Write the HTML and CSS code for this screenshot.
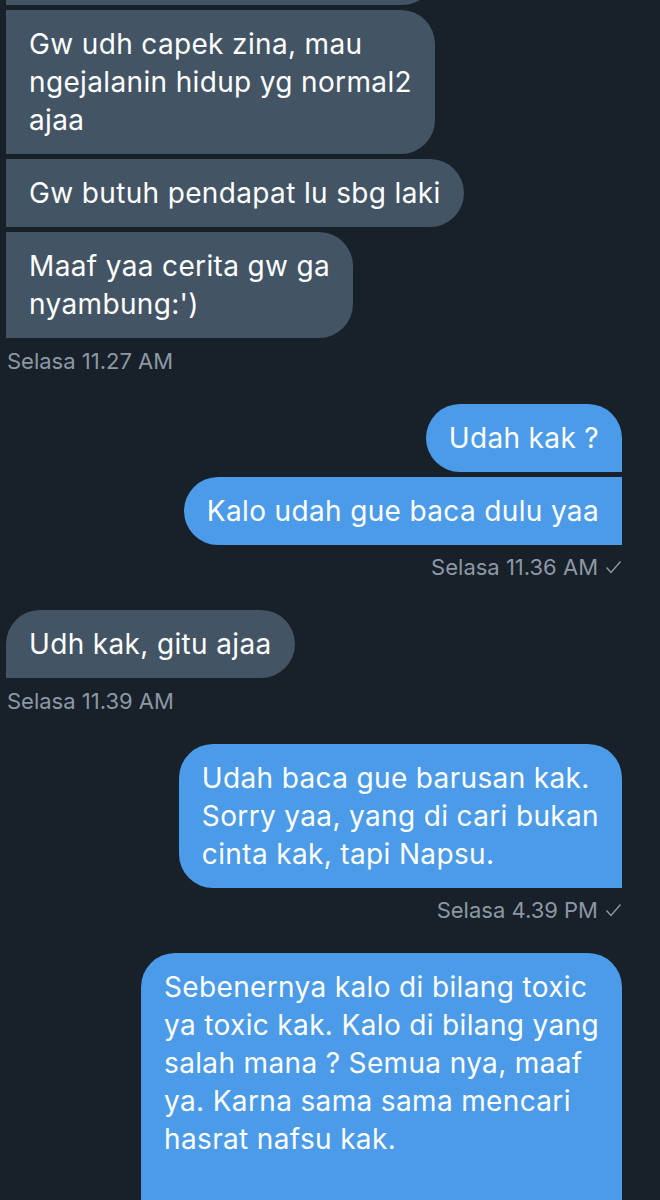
FILE: index.html
```html
<!DOCTYPE html>
<html lang="id">
<head>
    <meta charset="UTF-8">
    <meta name="viewport" content="width=device-width, initial-scale=1.0">
    <title>Pesan</title>
    <link rel="stylesheet" href="styles.css">
</head>
<body>
    <div class="chat">
        <div class="group received">
            <div class="bubble first stub"></div>
            <div class="bubble">Gw udh capek zina, mau<br>ngejalanin hidup yg normal2<br>ajaa</div>
            <div class="bubble">Gw butuh pendapat lu sbg laki</div>
            <div class="bubble">Maaf yaa cerita gw ga<br>nyambung:')</div>
            <div class="time">Selasa 11.27 AM</div>
        </div>

        <div class="group sent">
            <div class="bubble first">Udah kak ?</div>
            <div class="bubble">Kalo udah gue baca dulu yaa</div>
            <div class="time">Selasa 11.36 AM
                <svg class="check" width="17" height="14" viewBox="0 0 17 14"><polyline points="1.5,7.5 6,12.5 15.5,1.5" fill="none" stroke="currentColor" stroke-width="1.4"/></svg>
            </div>
        </div>

        <div class="group received">
            <div class="bubble first">Udh kak, gitu ajaa</div>
            <div class="time">Selasa 11.39 AM</div>
        </div>

        <div class="group sent">
            <div class="bubble first">Udah baca gue barusan kak.<br>Sorry yaa, yang di cari bukan<br>cinta kak, tapi Napsu.</div>
            <div class="time">Selasa 4.39 PM
                <svg class="check" width="17" height="14" viewBox="0 0 17 14"><polyline points="1.5,7.5 6,12.5 15.5,1.5" fill="none" stroke="currentColor" stroke-width="1.4"/></svg>
            </div>
        </div>

        <div class="group sent">
            <div class="bubble first last-open">Sebenernya kalo di bilang toxic<br>ya toxic kak. Kalo di bilang yang<br>salah mana ? Semua nya, maaf<br>ya. Karna sama sama mencari<br>hasrat nafsu kak.</div>
        </div>
    </div>
</body>
</html>
```

FILE: styles.css
```css
body {
    margin: 0;
    background-color: #18202a;
    font-family: "Inter", "Noto Sans", sans-serif;
    color: #fff;
    overflow: hidden;
}

.chat {
    display: flex;
    flex-direction: column;
    margin-top: -63px;
    padding: 0 38px 0 6px;
}

.group {
    display: flex;
    flex-direction: column;
    gap: 5px;
    margin-bottom: 30px;
}

.received {
    align-items: flex-start;
}

.sent {
    align-items: flex-end;
}

.bubble {
    font-size: 28px;
    line-height: 38px;
    letter-spacing: 0.35px;
    padding: 15px 23px;
    white-space: nowrap;
}

.stub {
    width: 384px;
    height: 38px;
}

.received .bubble {
    background-color: #435465;
    border-radius: 0 34px 34px 0;
}

.received .bubble.first {
    border-top-left-radius: 34px;
}

.sent .bubble {
    background-color: #4b9be8;
    border-radius: 34px 0 0 34px;
}

.sent .bubble.first {
    border-top-right-radius: 34px;
}

.last-open {
    padding-bottom: 80px;
}

.time {
    display: flex;
    align-items: center;
    gap: 7px;
    margin-top: 4.5px;
    font-size: 22px;
    line-height: 26px;
    color: #8c98a4;
}

.received .time {
    padding-left: 1px;
}

.check {
    color: #8c98a4;
}
```
